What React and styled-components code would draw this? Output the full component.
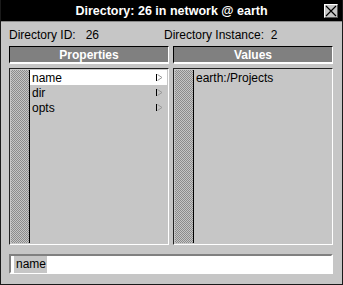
import React from 'react';
import styled, { createGlobalStyle } from 'styled-components';

const GlobalStyle = createGlobalStyle`
    html, body {
        margin: 0;
        padding: 0;
        background: #c6c6c6;
    }
    body {
        font-family: "Liberation Sans", Arial, sans-serif;
        font-size: 12px;
        color: #000;
    }
`;

const Window = styled.div`
    width: 343px;
    height: 285px;
    box-sizing: border-box;
    border: 1px solid #1a1a1a;
    border-top: none;
    background: #c6c6c6;
    display: flex;
    flex-direction: column;
`;

const TitleBar = styled.div`
    height: 22px;
    background: #000;
    border-bottom: 1px solid #8a8a8a;
    display: flex;
    align-items: center;
    justify-content: center;
    position: relative;
    color: #fff;
    font-weight: bold;
    font-size: 12.5px;
`;

const CloseButton = styled.div`
    position: absolute;
    right: 4px;
    top: 4px;
    width: 14px;
    height: 14px;
    box-sizing: border-box;
    background: #c6c6c6;
    border: 1px solid #fff;
    border-right-color: #555;
    border-bottom-color: #555;
    display: flex;
    align-items: center;
    justify-content: center;
`;

const Content = styled.div`
    flex: 1;
    display: flex;
    flex-direction: column;
    padding: 0 9px 10px 8px;
`;

const InfoRow = styled.div`
    height: 23px;
    display: flex;
    align-items: center;
    padding-top: 1px;
`;

const InfoItem = styled.div`
    width: ${(p) => p.width}px;
    white-space: pre;
`;

const Columns = styled.div`
    display: grid;
    grid-template-columns: 160px 160px;
    column-gap: 4px;
    grid-template-rows: 18px 177px;
    row-gap: 4px;
`;

const Header = styled.div`
    box-sizing: border-box;
    background: #808080;
    border: 1px solid #000;
    border-right-color: #fff;
    border-bottom-color: #fff;
    border-bottom-width: 2px;
    color: #fff;
    font-weight: bold;
    display: flex;
    align-items: center;
    justify-content: center;
    padding-top: 1px;
`;

const ListBox = styled.div`
    box-sizing: border-box;
    border: 1px solid #fff;
    border-top-color: #222;
    border-left-color: #222;
    padding: 1px;
    display: flex;
`;

const Stipple = styled.div`
    width: 18px;
    border-right: 1px solid #000;
    background: repeating-conic-gradient(#8c8c8c 0 25%, #c6c6c6 0 50%) 0 0 / 2px 2px;
`;

const Rows = styled.div`
    flex: 1;
    display: flex;
    flex-direction: column;
`;

const Row = styled.div`
    height: 15px;
    display: flex;
    align-items: center;
    padding: 0 4px 0 2px;
    background: ${(p) => (p.selected ? '#fff' : 'transparent')};
    justify-content: space-between;
`;

const InputField = styled.div`
    margin-top: 9px;
    height: 20px;
    box-sizing: border-box;
    border: 2px solid #fff;
    border-top-color: #808080;
    border-left-color: #808080;
    background: #fff;
    display: flex;
    align-items: center;
    padding-left: 3px;
`;

const Selected = styled.span`
    background: #c6c6c6;
    padding: 1px 1px 1px 2px;
    line-height: 15px;
`;

const Arrow = () => (
    <svg width="7" height="9" viewBox="0 0 7 9">
        <line x1="0.5" y1="1" x2="0.5" y2="8" stroke="#000" />
        <path d="M1.5 1.5 L6 4.5 L1.5 7.5" fill="none" stroke="#999" />
    </svg>
);

const CloseIcon = () => (
    <svg width="12" height="12" viewBox="0 0 12 12">
        <path d="M1 1 L11 11 M11 1 L1 11" stroke="#000" strokeWidth="1.2" />
    </svg>
);

const properties = ['name', 'dir', 'opts'];

export default function App() {
    return (
        <>
            <GlobalStyle />
            <Window>
                <TitleBar>
                    Directory: 26 in network @ earth
                    <CloseButton>
                        <CloseIcon />
                    </CloseButton>
                </TitleBar>
                <Content>
                    <InfoRow>
                        <InfoItem width={155}>{'Directory ID:   26'}</InfoItem>
                        <InfoItem width={160}>{'Directory Instance:  2'}</InfoItem>
                    </InfoRow>
                    <Columns>
                        <Header>Properties</Header>
                        <Header>Values</Header>
                        <ListBox>
                            <Stipple />
                            <Rows>
                                {properties.map((p, i) => (
                                    <Row key={p} selected={i === 0}>
                                        {p}
                                        <Arrow />
                                    </Row>
                                ))}
                            </Rows>
                        </ListBox>
                        <ListBox>
                            <Stipple />
                            <Rows>
                                <Row>earth:/Projects</Row>
                            </Rows>
                        </ListBox>
                    </Columns>
                    <InputField>
                        <Selected>name</Selected>
                    </InputField>
                </Content>
            </Window>
        </>
    );
}
